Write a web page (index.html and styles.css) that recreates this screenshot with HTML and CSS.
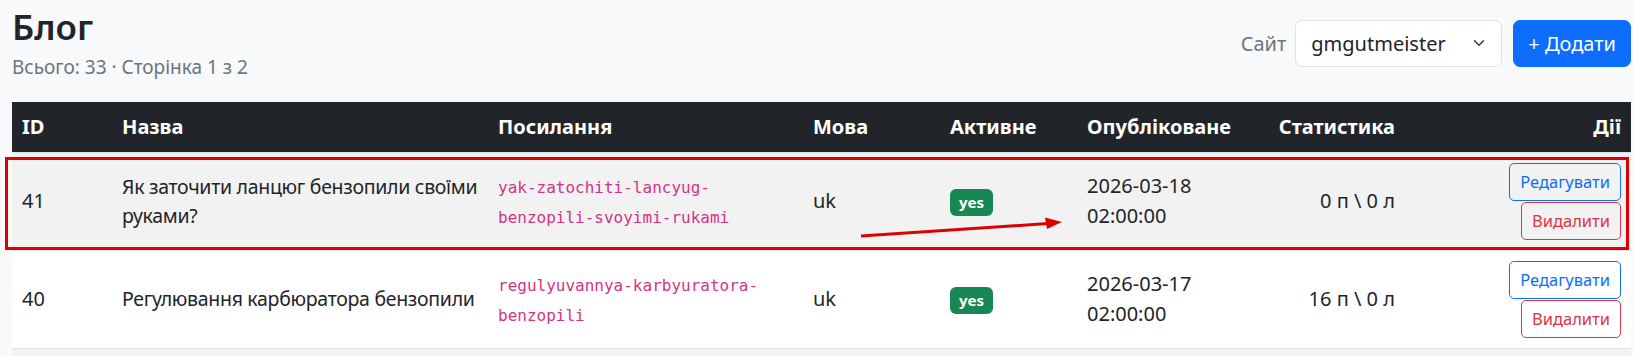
FILE: index.html
```html
<!DOCTYPE html>
<html lang="uk">
<head>
    <meta charset="UTF-8">
    <meta name="viewport" content="width=device-width, initial-scale=1.0">
    <title>Блог</title>
    <link rel="stylesheet" href="styles.css">
</head>
<body>
    <div class="page">
        <div class="page-head">
            <div>
                <h1>Блог</h1>
                <p class="summary">Всього: 33 · Сторінка 1 з 2</p>
            </div>
            <div class="controls">
                <label for="site" class="site-label">Сайт</label>
                <div class="select-wrap">
                    <select id="site" class="site-select">
                        <option>gmgutmeister</option>
                    </select>
                    <svg class="chevron" viewBox="0 0 16 16" width="16" height="12"><path fill="none" stroke="#343a40" stroke-linecap="round" stroke-linejoin="round" stroke-width="2" d="m2 5 6 6 6-6"/></svg>
                </div>
                <button class="btn-add">+ Додати</button>
            </div>
        </div>

        <table class="posts">
            <thead>
                <tr>
                    <th class="col-id">ID</th>
                    <th class="col-title">Назва</th>
                    <th class="col-slug">Посилання</th>
                    <th class="col-lang">Мова</th>
                    <th class="col-active">Активне</th>
                    <th class="col-date">Опубліковане</th>
                    <th class="col-stats">Статистика</th>
                    <th class="col-actions">Дії</th>
                </tr>
            </thead>
            <tbody>
                <tr>
                    <td>41</td>
                    <td class="title-cell">Як заточити ланцюг бензопили своїми руками?</td>
                    <td><code>yak-zatochiti-lancyug-benzopili-svoyimi-rukami</code></td>
                    <td>uk</td>
                    <td><span class="badge">yes</span></td>
                    <td>2026-03-18 02:00:00</td>
                    <td class="col-stats">0 п \ 0 л</td>
                    <td>
                        <div class="actions">
                            <button class="btn-edit">Редагувати</button>
                            <button class="btn-delete">Видалити</button>
                        </div>
                    </td>
                </tr>
                <tr>
                    <td>40</td>
                    <td class="title-cell">Регулювання карбюратора бензопили</td>
                    <td><code>regulyuvannya-karbyuratora-benzopili</code></td>
                    <td>uk</td>
                    <td><span class="badge">yes</span></td>
                    <td>2026-03-17 02:00:00</td>
                    <td class="col-stats">16 п \ 0 л</td>
                    <td>
                        <div class="actions">
                            <button class="btn-edit">Редагувати</button>
                            <button class="btn-delete">Видалити</button>
                        </div>
                    </td>
                </tr>
                <tr>
                    <td></td>
                    <td></td>
                    <td></td>
                    <td></td>
                    <td></td>
                    <td></td>
                    <td></td>
                    <td>&nbsp;</td>
                </tr>
            </tbody>
        </table>

        <!-- annotation drawn over the screenshot -->
        <svg class="annot" width="1633" height="356" viewBox="0 0 1633 356">
            <rect x="6.5" y="158.5" width="1621" height="90" fill="none" stroke="#dd0000" stroke-width="3"/>
            <line x1="861" y1="236" x2="1048" y2="223.5" stroke="#dd0000" stroke-width="3"/>
            <polygon points="1062,222 1045,217.5 1047,229" fill="#dd0000"/>
        </svg>
    </div>
</body>
</html>
```

FILE: styles.css
```css
body {
    margin: 0;
    background-color: #f8f9fa;
    font-family: "Noto Sans", "Open Sans", sans-serif;
    font-size: 20px;
    line-height: 1.5;
    color: #212529;
}
.page {
    position: relative;
    padding: 0 2px 0 12px;
    height: 356px;
    overflow: hidden;
}
.page-head {
    display: flex;
    justify-content: space-between;
    align-items: center;
    padding-top: 6px;
    margin-bottom: 20px;
}
h1 {
    margin: 0 0 5px;
    font-size: 35px;
    font-weight: 600;
    line-height: 1.2;
}
.summary {
    margin: 0;
    font-size: 19px;
    color: #6c757d;
}
.controls {
    display: flex;
    align-items: center;
}
.site-label {
    color: #6c757d;
    margin-right: 9px;
}
.select-wrap {
    position: relative;
    margin-right: 11px;
}
.site-select {
    appearance: none;
    -webkit-appearance: none;
    width: 207px;
    height: 47px;
    padding: 7px 45px 7px 15px;
    font-family: inherit;
    font-size: 20px;
    color: #212529;
    background: #fff;
    border: 1px solid #dee2e6;
    border-radius: 7px;
}
.chevron {
    position: absolute;
    right: 15px;
    top: 17px;
    pointer-events: none;
}
.btn-add {
    height: 47px;
    padding: 0 14px;
    font-family: inherit;
    font-size: 20px;
    color: #fff;
    background-color: #0d6efd;
    border: 1px solid #0d6efd;
    border-radius: 7px;
}
.posts {
    width: 1619px;
    border-collapse: collapse;
    table-layout: fixed;
    background: #fff;
}
.posts th,
.posts td {
    box-sizing: border-box;
    padding: 10px;
    border-bottom: 1px solid #dee2e6;
}
.posts th {
    background-color: #212529;
    color: #fff;
    font-weight: 700;
    text-align: left;
}
.posts td {
    vertical-align: middle;
}
.posts tbody tr:nth-child(odd) td {
    background-color: #f2f2f2;
}
.posts .title-cell {
    font-size: 19.5px;
    letter-spacing: -0.3px;
}
.col-id { width: 100px; }
.col-title { width: 376px; }
.col-slug { width: 315px; }
.col-lang { width: 137px; }
.col-active { width: 137px; }
.col-date { width: 173px; }
.col-stats { width: 155px; }
.col-actions { width: 226px; }
.posts .col-stats,
.posts .col-actions {
    text-align: right;
}
code {
    font-family: "DejaVu Sans Mono", "Liberation Mono", monospace;
    font-size: 16px;
    color: #d63384;
    word-wrap: break-word;
}
.badge {
    display: inline-block;
    padding: 6px 9px;
    font-size: 15px;
    font-weight: 700;
    line-height: 1;
    color: #fff;
    background-color: #198754;
    border-radius: 6px;
}
.actions {
    display: flex;
    flex-direction: column;
    align-items: flex-end;
    gap: 1px;
}
.actions button {
    height: 38px;
    padding: 0 10px;
    font-family: inherit;
    font-size: 16.5px;
    background: transparent;
    border-radius: 5px;
}
.btn-edit {
    color: #0d6efd;
    border: 1px solid #0d6efd;
}
.btn-delete {
    color: #dc3545;
    border: 1px solid #dc3545;
}
.annot {
    position: absolute;
    top: 0;
    left: 0;
    pointer-events: none;
}
```
